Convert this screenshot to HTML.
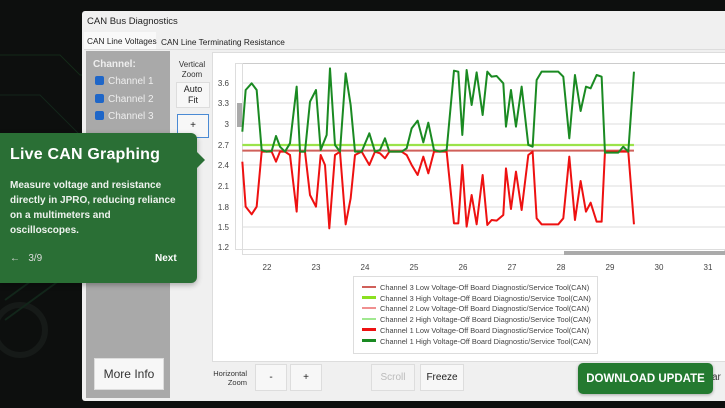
<!DOCTYPE html>
<html><head><style>
body{margin:0;width:725px;height:408px;overflow:hidden;background:#0d0f0e;font-family:"Liberation Sans",sans-serif;position:relative}
.a{position:absolute}
.btn{position:absolute;background:#f7f7f7;border:1px solid #ddd;font-size:10px;color:#222;display:flex;align-items:center;justify-content:center;text-align:center;line-height:1.2}
.cb{display:inline-block;width:9px;height:9px;background:#1e66c8;border-radius:2px;margin-right:4px;vertical-align:-1px}
</style></head><body>
<svg class="a" style="left:0;top:0" width="725" height="408">
<path d="M0 55 L60 55 L80 75 L240 75" stroke="#142a18" stroke-width="1" fill="none"/>
<path d="M0 95 L40 95 L80 135" stroke="#12261a" stroke-width="1" fill="none"/>
<circle cx="20" cy="330" r="25" fill="none" stroke="#161a18" stroke-width="6"/>
<path d="M5 300 L60 260 M5 320 L60 280" stroke="#12261a" stroke-width="2"/>
</svg>
<div class="a" style="left:82px;top:11px;width:643px;height:390px;background:#f0f0f0;border-radius:3px 0 0 3px"></div>
<div class="a" style="left:87px;top:16px;font-size:9.5px;color:#222">CAN Bus Diagnostics</div>
<div class="a" style="left:84px;top:32px;width:72px;height:17px;background:#f9f9f9"></div>
<div class="a" style="left:87px;top:36px;font-size:8.3px;color:#222">CAN Line Voltages</div>
<div class="a" style="left:161px;top:37px;font-size:8.3px;color:#222">CAN Line Terminating Resistance</div>
<div class="a" style="left:84px;top:49px;width:641px;height:1px;background:#ddd"></div>
<div class="a" style="left:86px;top:51px;width:84px;height:347px;background:#a9a9a9"></div>
<div class="a" style="left:93px;top:59px;font-size:10px;font-weight:bold;color:#eee">Channel:</div>
<div class="a" style="left:95px;top:73px;font-size:10px;color:#eee;line-height:17.5px"><div><span class="cb"></span>Channel 1</div><div><span class="cb"></span>Channel 2</div><div><span class="cb"></span>Channel 3</div></div>
<div class="btn" style="left:94px;top:358px;width:68px;height:30px;font-size:12px;color:#333">More Info</div>
<div class="a" style="left:172px;top:60px;width:40px;text-align:center;font-size:8px;color:#333;line-height:10px">Vertical<br>Zoom</div>
<div class="btn" style="left:176px;top:82px;width:32px;height:24px;font-size:9px">Auto<br>Fit</div>
<div class="btn" style="left:177px;top:114px;width:30px;height:22px;border-color:#4a8ad4">+</div>
<div class="a" style="left:212px;top:52px;width:513px;height:308px;background:#fff;border:1px solid #ddd"></div>
<div class="a" style="left:242px;top:63px;width:483px;height:185px;border:1px solid #ccc;border-right:none"></div>
<div class="a" style="left:235px;top:63px;width:6px;height:185px;border:1px solid #ddd"></div>
<div class="a" style="left:237px;top:103px;width:5px;height:24px;background:#aaa"></div>
<div class="a" style="left:242px;top:249px;width:483px;height:6px;border:1px solid #ddd;box-sizing:border-box"></div>
<div class="a" style="left:564px;top:251px;width:161px;height:4px;background:#aaa"></div>
<svg class="a" style="left:0;top:0" width="725" height="408">
<g stroke="#ddd" stroke-width="1">
<line x1="243" x2="725" y1="83" y2="83"/><line x1="243" x2="725" y1="103" y2="103"/><line x1="243" x2="725" y1="124" y2="124"/><line x1="243" x2="725" y1="145" y2="145"/><line x1="243" x2="725" y1="165" y2="165"/><line x1="243" x2="725" y1="186" y2="186"/><line x1="243" x2="725" y1="207" y2="207"/><line x1="243" x2="725" y1="227" y2="227"/>
</g>
<g font-size="8" fill="#444" font-family="Liberation Sans" text-anchor="end">
<text x="229" y="86">3.6</text><text x="229" y="106">3.3</text><text x="229" y="127">3</text><text x="229" y="148">2.7</text><text x="229" y="168">2.4</text><text x="229" y="189">2.1</text><text x="229" y="210">1.8</text><text x="229" y="230">1.5</text><text x="229" y="250">1.2</text>
</g>
<g font-size="8" fill="#444" font-family="Liberation Sans" text-anchor="middle">
<text x="267" y="270">22</text><text x="316" y="270">23</text><text x="365" y="270">24</text><text x="414" y="270">25</text><text x="463" y="270">26</text><text x="512" y="270">27</text><text x="561" y="270">28</text><text x="610" y="270">29</text><text x="659" y="270">30</text><text x="708" y="270">31</text>
</g>
<g transform="translate(230,55) scale(0.3333)" fill="none" stroke-width="6" stroke-linejoin="round">
<line x1="37" x2="1212" y1="270" y2="270" stroke="#9be34a" stroke-width="7"/>
<line x1="37" x2="1212" y1="287" y2="287" stroke="#d0605a"/>
<polyline stroke="#ee1111" points="37,320 47,455 65,478 80,455 95,290 125,290 138,320 150,290 165,290 180,300 200,470 210,290 225,290 240,420 258,455 272,300 285,330 298,520 315,300 330,290 347,508 362,430 375,300 395,290 418,330 435,290 450,295 465,310 478,290 515,290 530,300 545,330 563,360 580,305 595,355 612,290 650,290 672,505 685,505 697,330 710,515 725,420 740,508 758,360 772,510 785,495 800,497 820,480 828,340 843,462 858,350 875,465 895,300 908,290 920,490 935,508 985,508 1000,490 1018,305 1035,495 1052,378 1068,470 1082,443 1100,500 1115,500 1125,290 1195,290 1212,508"/>
<polyline stroke="#1a8a22" points="37,230 47,105 65,85 80,105 95,285 110,290 125,288 138,243 150,275 165,290 180,265 200,95 210,290 225,290 240,140 258,105 272,285 290,240 300,40 315,270 330,290 347,55 362,150 375,290 395,290 418,235 435,290 450,285 465,250 478,290 495,290 515,290 530,280 545,220 563,197 580,262 595,203 612,285 630,290 650,285 672,47 685,50 697,240 710,45 725,150 740,52 758,180 772,50 785,65 800,63 820,85 828,215 843,105 858,215 875,95 895,270 908,275 920,75 935,50 985,50 1000,65 1018,250 1035,60 1052,168 1068,95 1082,100 1100,60 1115,65 1125,293 1165,293 1180,275 1195,290 1212,50"/>
</g>
</svg>
<div class="a" style="left:353px;top:276px;width:245px;height:78px;border:1px solid #ddd;background:#fff;font-size:7.4px;color:#444;line-height:10.7px;padding-top:6px;box-sizing:border-box;padding-left:8px">
<div><span style="display:inline-block;width:14px;height:2.5px;background:#d0605a;margin-right:4px;vertical-align:2px"></span>Channel 3 Low Voltage-Off Board Diagnostic/Service Tool(CAN)</div>
<div><span style="display:inline-block;width:14px;height:2.5px;background:#8be020;margin-right:4px;vertical-align:2px"></span>Channel 3 High Voltage-Off Board Diagnostic/Service Tool(CAN)</div>
<div><span style="display:inline-block;width:14px;height:2.5px;background:#f09090;margin-right:4px;vertical-align:2px"></span>Channel 2 Low Voltage-Off Board Diagnostic/Service Tool(CAN)</div>
<div><span style="display:inline-block;width:14px;height:2.5px;background:#a0e890;margin-right:4px;vertical-align:2px"></span>Channel 2 High Voltage-Off Board Diagnostic/Service Tool(CAN)</div>
<div><span style="display:inline-block;width:14px;height:2.5px;background:#ee1111;margin-right:4px;vertical-align:2px"></span>Channel 1 Low Voltage-Off Board Diagnostic/Service Tool(CAN)</div>
<div><span style="display:inline-block;width:14px;height:2.5px;background:#1a8a22;margin-right:4px;vertical-align:2px"></span>Channel 1 High Voltage-Off Board Diagnostic/Service Tool(CAN)</div>
</div>
<div class="a" style="left:205px;top:369px;width:42px;text-align:right;font-size:7.5px;color:#333;line-height:9px">Horizontal<br>Zoom</div>
<div class="btn" style="left:255px;top:364px;width:30px;height:25px">-</div>
<div class="btn" style="left:290px;top:364px;width:30px;height:25px">+</div>
<div class="btn" style="left:371px;top:364px;width:42px;height:25px;color:#bbb;background:#f3f3f3">Scroll</div>
<div class="btn" style="left:420px;top:364px;width:42px;height:25px">Freeze</div>
<div class="a" style="left:712px;top:372px;font-size:10px;color:#333">ar</div>
<div class="a" style="left:578px;top:363px;width:135px;height:31px;background:#247a30;border-radius:5px;color:#fff;font-weight:bold;font-size:11.5px;display:flex;align-items:center;justify-content:center;box-shadow:0 1px 3px rgba(0,0,0,.3)">DOWNLOAD UPDATE</div>
<div class="a" style="left:0;top:133px;width:197px;height:150px;background:#2a6f35;border-radius:0 6px 6px 0;box-shadow:0 2px 6px rgba(0,0,0,.3)"></div>
<div class="a" style="left:196px;top:151px;width:0;height:0;border-top:9px solid transparent;border-bottom:9px solid transparent;border-left:9px solid #2a6f35"></div>
<div class="a" style="left:10px;top:146px;font-size:16px;font-weight:bold;color:#fff;letter-spacing:0.2px">Live CAN Graphing</div>
<div class="a" style="left:10px;top:178px;width:190px;font-size:10px;font-weight:bold;color:#eef2ee;line-height:15px;white-space:nowrap">Measure voltage and resistance<br>directly in JPRO, reducing reliance<br>on a multimeters and<br>oscilloscopes.</div>
<div class="a" style="left:10px;top:253px;font-size:10px;color:#ddd">&#8592;&nbsp;&nbsp;&nbsp;3/9</div>
<div class="a" style="left:155px;top:253px;font-size:10px;font-weight:bold;color:#fff">Next</div>
</body></html>
